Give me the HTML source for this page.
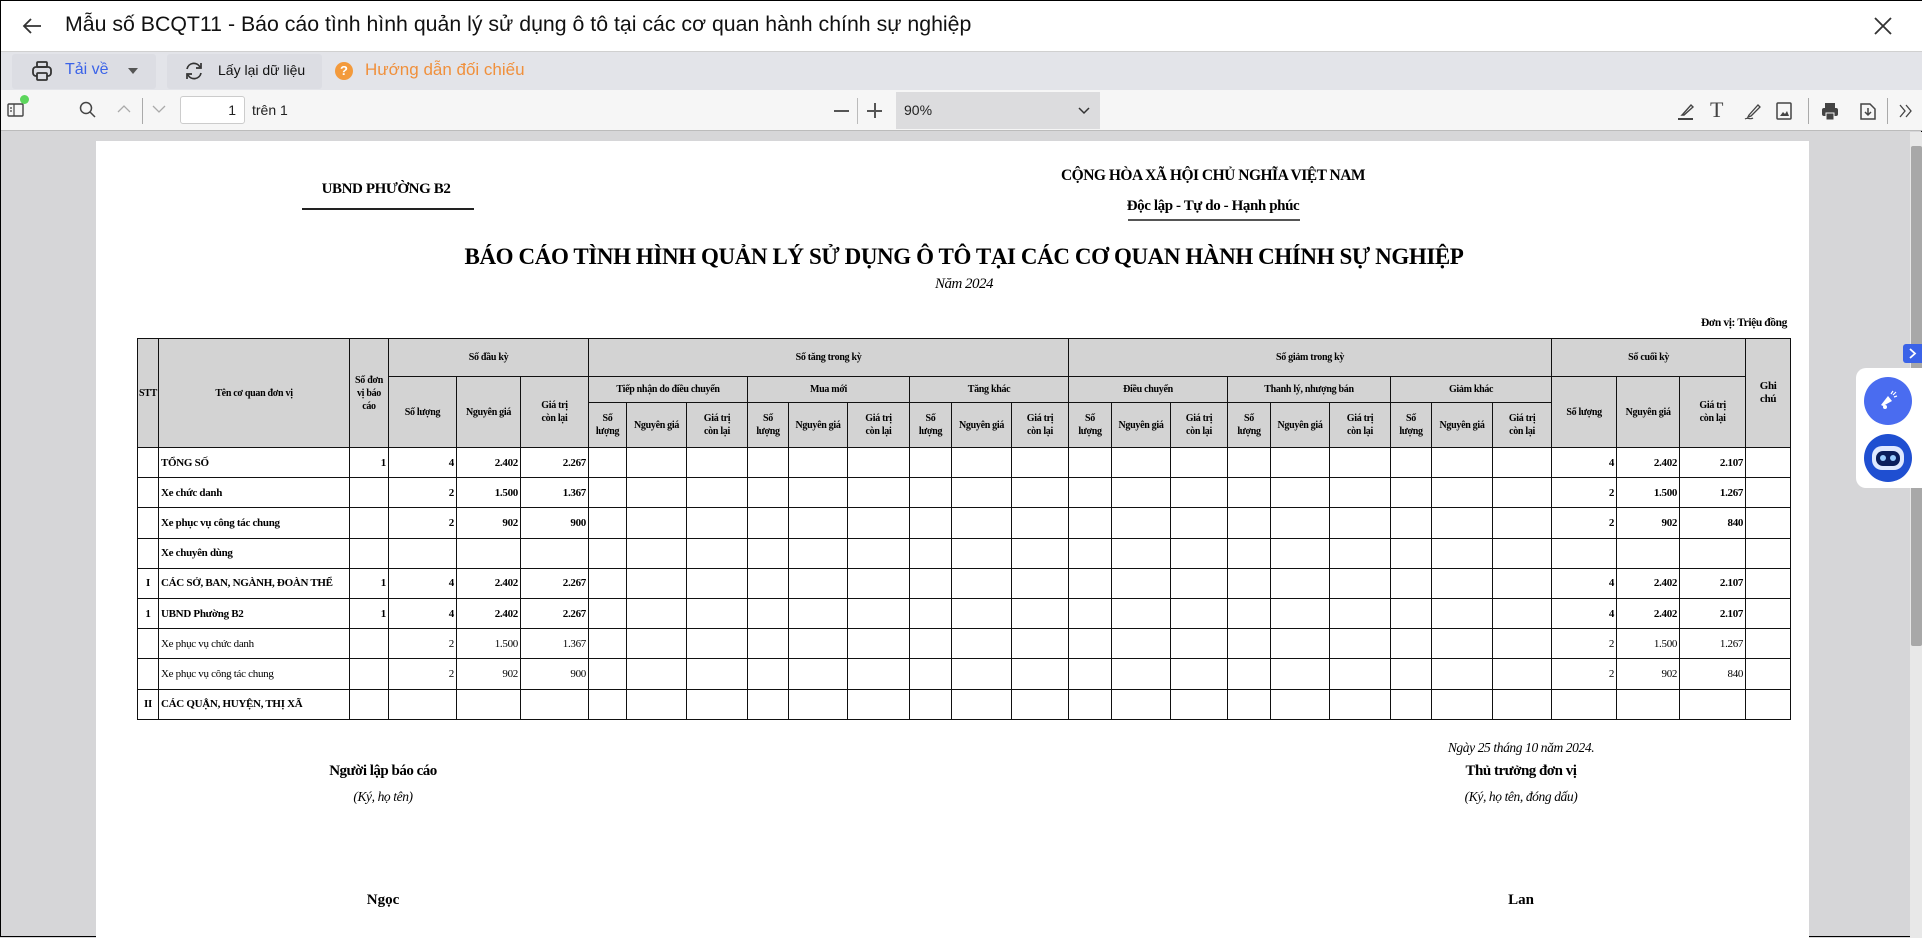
<!DOCTYPE html>
<html><head><meta charset="utf-8">
<style>
*{box-sizing:border-box;margin:0;padding:0}
body{width:1922px;height:937px;overflow:hidden;background:#d6d6d8;font-family:"Liberation Sans",sans-serif;position:relative;border:1px solid #000}
.abs{position:absolute}
.ser{font-family:"Liberation Serif",serif;color:#000;white-space:nowrap}
.c{transform:translateX(-50%)}
table{border-collapse:collapse;table-layout:fixed;font-family:"Liberation Serif",serif;font-size:10.5px;letter-spacing:-0.3px}
td{border:1px solid #111;overflow:hidden;white-space:nowrap;padding:0 2px}
thead td{background:#d3d3d3;font-weight:bold;text-align:center;white-space:nowrap;line-height:13px;font-size:10px}
tbody td{height:30.2px;text-align:right;font-weight:bold;font-size:11px}
tbody td.n{text-align:left}
tbody td.s{text-align:center}
tr.r td{font-weight:normal}
</style></head><body>
<div class="abs" style="left:0;top:0;width:1922px;height:51px;background:#fff;border-bottom:1px solid #d0d0d0"></div>
<svg class="abs" style="left:20px;top:15px" width="22" height="20" viewBox="0 0 22 20"><path d="M20 10H3M10 3L3 10l7 7" stroke="#333" stroke-width="1.8" fill="none"/></svg>
<div class="abs" style="left:64px;top:11px;font-size:21.3px;color:#111;font-weight:500;white-space:nowrap">Mẫu số BCQT11 - Báo cáo tình hình quản lý sử dụng ô tô tại các cơ quan hành chính sự nghiệp</div>
<svg class="abs" style="left:1872px;top:15px" width="20" height="20" viewBox="0 0 20 20"><path d="M2 2l16 16M18 2L2 18" stroke="#333" stroke-width="1.8"/></svg>
<div class="abs" style="left:0;top:51px;width:1922px;height:38px;background:#e3e4e9"></div>
<div class="abs" style="left:11px;top:53px;width:144px;height:35px;background:#dcdde3;border-radius:3px"></div>
<div class="abs" style="left:166px;top:53px;width:155px;height:35px;background:#dcdde3;border-radius:3px"></div>
<svg class="abs" style="left:30px;top:59px" width="22" height="22" viewBox="0 0 22 22"><rect x="2" y="7" width="18" height="9" rx="3" fill="none" stroke="#333" stroke-width="1.8"/><rect x="6" y="2" width="10" height="5" rx="1" fill="none" stroke="#333" stroke-width="1.8"/><rect x="6" y="13" width="10" height="7" rx="1" fill="#dcdde3" stroke="#333" stroke-width="1.8"/></svg>
<div class="abs" style="left:64px;top:60px;font-size:16px;color:#3b63e8">Tải về</div>
<svg class="abs" style="left:127px;top:66px" width="10" height="8"><path d="M0 1h10L5 7z" fill="#555"/></svg>
<svg class="abs" style="left:183px;top:60px" width="20" height="20" viewBox="0 0 20 20"><path d="M16 6A7 7 0 0 0 3 8M4 14a7 7 0 0 0 13-2" stroke="#333" stroke-width="1.7" fill="none"/><path d="M17 2v5h-5M3 18v-5h5" stroke="#333" stroke-width="1.7" fill="none"/></svg>
<div class="abs" style="left:217px;top:61px;font-size:14px;color:#111;font-weight:500">Lấy lại dữ liệu</div>
<div class="abs" style="left:334px;top:61px;width:18px;height:18px;border-radius:50%;background:#f39a3c;color:#fff;font-size:13px;font-weight:bold;text-align:center;line-height:18px">?</div>
<div class="abs" style="left:364px;top:59px;font-size:17px;color:#f0903c">Hướng dẫn đối chiếu</div>
<div class="abs" style="left:0;top:89px;width:1922px;height:41px;background:#f6f6f6;border-bottom:1px solid #bbb"></div>
<svg class="abs" style="left:6px;top:99px" width="20" height="18" viewBox="0 0 20 18"><rect x="1" y="4" width="15" height="12" rx="1" fill="none" stroke="#444" stroke-width="1.4"/><path d="M7 4v12M3 8h2M3 11h2" stroke="#444" stroke-width="1.2"/></svg>
<div class="abs" style="left:19px;top:94px;width:9px;height:9px;border-radius:50%;background:#5cd65c"></div>
<svg class="abs" style="left:78px;top:100px" width="18" height="18" viewBox="0 0 18 18"><circle cx="7" cy="7" r="5.5" fill="none" stroke="#444" stroke-width="1.5"/><path d="M11 11l5 5" stroke="#444" stroke-width="1.5"/></svg>
<svg class="abs" style="left:116px;top:103px" width="14" height="10"><path d="M1 8l6-6 6 6" stroke="#aaa" stroke-width="1.3" fill="none"/></svg>
<div class="abs" style="left:141px;top:97px;width:1px;height:26px;background:#aaa"></div>
<svg class="abs" style="left:151px;top:103px" width="14" height="10"><path d="M1 2l6 6 6-6" stroke="#aaa" stroke-width="1.3" fill="none"/></svg>
<div class="abs" style="left:179px;top:95px;width:65px;height:28px;background:#fff;border:1px solid #ccc;border-radius:3px;font-size:14px;text-align:right;padding:5px 8px 0 0;color:#222">1</div>
<div class="abs" style="left:251px;top:101px;font-size:14px;color:#222">trên 1</div>
<div class="abs" style="left:833px;top:109px;width:15px;height:1.5px;background:#555"></div>
<div class="abs" style="left:856px;top:97px;width:1px;height:26px;background:#bbb"></div>
<div class="abs" style="left:866px;top:109px;width:15px;height:1.5px;background:#555"></div>
<div class="abs" style="left:873px;top:102px;width:1.5px;height:15px;background:#555"></div>
<div class="abs" style="left:895px;top:91px;width:204px;height:37px;background:#dcdcde"></div>
<div class="abs" style="left:903px;top:101px;font-size:14px;color:#222">90%</div>
<svg class="abs" style="left:1077px;top:106px" width="12" height="8"><path d="M1 1l5 5 5-5" stroke="#333" stroke-width="1.5" fill="none"/></svg>
<svg class="abs" style="left:1675px;top:100px" width="20" height="20" viewBox="0 0 20 20"><path d="M7 13l8-9 2 2-9 8H6z" fill="none" stroke="#444" stroke-width="1.4"/><path d="M2 18h15" stroke="#444" stroke-width="2"/></svg>
<div class="abs ser" style="left:1709px;top:96px;font-size:22px;color:#444;font-weight:normal">T</div>
<svg class="abs" style="left:1742px;top:100px" width="20" height="20" viewBox="0 0 20 20"><path d="M6 14l9-10 2 2-9 9-3 1z" fill="none" stroke="#444" stroke-width="1.3"/><path d="M2 18c3-2 5 1 8-1" stroke="#444" stroke-width="1.2" fill="none"/></svg>
<svg class="abs" style="left:1774px;top:101px" width="18" height="18" viewBox="0 0 18 18"><rect x="2" y="1" width="14" height="16" rx="1" fill="none" stroke="#444" stroke-width="1.5"/><path d="M5 14l3-4 2 2 2-3 2 5z" fill="#444"/></svg>
<div class="abs" style="left:1807px;top:97px;width:1px;height:26px;background:#aaa"></div>
<svg class="abs" style="left:1819px;top:100px" width="20" height="20" viewBox="0 0 20 20"><rect x="5" y="2" width="10" height="5" fill="#444"/><rect x="2" y="7" width="16" height="8" rx="2" fill="#444"/><rect x="6" y="12" width="8" height="7" fill="#444" stroke="#f6f6f6" stroke-width="1"/></svg>
<svg class="abs" style="left:1857px;top:100px" width="20" height="20" viewBox="0 0 20 20"><path d="M3 3h9l5 5v10H3z" fill="none" stroke="#444" stroke-width="1.5"/><path d="M10 7v7M7 11l3 3 3-3" stroke="#444" stroke-width="1.5" fill="none"/></svg>
<div class="abs" style="left:1886px;top:97px;width:1px;height:26px;background:#aaa"></div>
<svg class="abs" style="left:1897px;top:103px" width="16" height="14"><path d="M2 1l5 6-5 6M8 1l5 6-5 6" stroke="#444" stroke-width="1.3" fill="none"/></svg>
<div class="abs" style="left:1909px;top:131px;width:13px;height:806px;background:#e8e8e8"></div>
<div class="abs" style="left:1910px;top:145px;width:11px;height:500px;background:#a8a8a8;border-radius:2px"></div>
<div class="abs" style="left:95px;top:140px;width:1713px;height:797px;background:#fff"></div>
<div class="abs ser c" style="left:385px;top:180px;font-size:15px;font-weight:bold;letter-spacing:-0.4px">UBND PHƯỜNG B2</div>
<div class="abs" style="left:301px;top:207px;width:172px;height:2px;background:#222"></div>
<div class="abs ser c" style="left:1212px;top:166px;font-size:15.5px;font-weight:bold;letter-spacing:-0.5px">CỘNG HÒA XÃ HỘI CHỦ NGHĨA VIỆT NAM</div>
<div class="abs ser c" style="left:1212px;top:197px;font-size:15px;font-weight:bold;letter-spacing:-0.4px">Độc lập - Tự do - Hạnh phúc</div>
<div class="abs" style="left:1127px;top:218px;width:172px;height:2px;background:#555"></div>
<div class="abs ser c" style="left:963px;top:243px;font-size:23px;font-weight:bold;letter-spacing:-0.4px">BÁO CÁO TÌNH HÌNH QUẢN LÝ SỬ DỤNG Ô TÔ TẠI CÁC CƠ QUAN HÀNH CHÍNH SỰ NGHIỆP</div>
<div class="abs ser c" style="left:963px;top:275px;font-size:15px;font-style:italic;letter-spacing:-0.5px">Năm 2024</div>
<div class="abs ser" style="right:134px;top:316px;font-size:11.5px;font-weight:bold;letter-spacing:-0.4px">Đơn vị: Triệu đồng</div>

<table class="abs" style="left:136px;top:337px;width:1653px">
<colgroup>
<col style="width:21px"><col style="width:191px"><col style="width:39px"><col style="width:68px"><col style="width:64px"><col style="width:68px">
<col style="width:38px"><col style="width:60px"><col style="width:61px"><col style="width:41px"><col style="width:59px"><col style="width:62px">
<col style="width:42px"><col style="width:60px"><col style="width:57px"><col style="width:43px"><col style="width:59px"><col style="width:57px">
<col style="width:43px"><col style="width:59px"><col style="width:61px"><col style="width:41px"><col style="width:61px"><col style="width:59px">
<col style="width:65px"><col style="width:63px"><col style="width:66px"><col style="width:45px">
</colgroup>
<thead>
<tr style="height:38px"><td rowspan="3" style="padding:0">STT</td><td rowspan="3">Tên cơ quan đơn vị</td><td rowspan="3">Số đơn<br>vị báo<br>cáo</td><td colspan="3">Số đầu kỳ</td><td colspan="9">Số tăng trong kỳ</td><td colspan="9">Số giảm trong kỳ</td><td colspan="3">Số cuối kỳ</td><td rowspan="3" style="font-size:11px">Ghi<br>chú</td></tr>
<tr style="height:26px"><td rowspan="2">Số lượng</td><td rowspan="2">Nguyên giá</td><td rowspan="2">Giá trị<br>còn lại</td><td colspan="3">Tiếp nhận do điều chuyển</td><td colspan="3">Mua mới</td><td colspan="3">Tăng khác</td><td colspan="3">Điều chuyển</td><td colspan="3">Thanh lý, nhượng bán</td><td colspan="3">Giảm khác</td><td rowspan="2">Số lượng</td><td rowspan="2">Nguyên giá</td><td rowspan="2">Giá trị<br>còn lại</td></tr>
<tr style="height:45px"><td>Số<br>lượng</td><td>Nguyên giá</td><td>Giá trị<br>còn lại</td><td>Số<br>lượng</td><td>Nguyên giá</td><td>Giá trị<br>còn lại</td><td>Số<br>lượng</td><td>Nguyên giá</td><td>Giá trị<br>còn lại</td><td>Số<br>lượng</td><td>Nguyên giá</td><td>Giá trị<br>còn lại</td><td>Số<br>lượng</td><td>Nguyên giá</td><td>Giá trị<br>còn lại</td><td>Số<br>lượng</td><td>Nguyên giá</td><td>Giá trị<br>còn lại</td></tr>
</thead>
<tbody>
<tr><td></td><td class="n">TỔNG SỐ</td><td>1</td><td>4</td><td>2.402</td><td>2.267</td><td></td><td></td><td></td><td></td><td></td><td></td><td></td><td></td><td></td><td></td><td></td><td></td><td></td><td></td><td></td><td></td><td></td><td></td><td>4</td><td>2.402</td><td>2.107</td><td></td></tr>
<tr><td></td><td class="n">Xe chức danh</td><td></td><td>2</td><td>1.500</td><td>1.367</td><td></td><td></td><td></td><td></td><td></td><td></td><td></td><td></td><td></td><td></td><td></td><td></td><td></td><td></td><td></td><td></td><td></td><td></td><td>2</td><td>1.500</td><td>1.267</td><td></td></tr>
<tr><td></td><td class="n">Xe phục vụ công tác chung</td><td></td><td>2</td><td>902</td><td>900</td><td></td><td></td><td></td><td></td><td></td><td></td><td></td><td></td><td></td><td></td><td></td><td></td><td></td><td></td><td></td><td></td><td></td><td></td><td>2</td><td>902</td><td>840</td><td></td></tr>
<tr><td></td><td class="n">Xe chuyên dùng</td><td></td><td></td><td></td><td></td><td></td><td></td><td></td><td></td><td></td><td></td><td></td><td></td><td></td><td></td><td></td><td></td><td></td><td></td><td></td><td></td><td></td><td></td><td></td><td></td><td></td><td></td></tr>
<tr><td class="s">I</td><td class="n">CÁC SỞ, BAN, NGÀNH, ĐOÀN THỂ</td><td>1</td><td>4</td><td>2.402</td><td>2.267</td><td></td><td></td><td></td><td></td><td></td><td></td><td></td><td></td><td></td><td></td><td></td><td></td><td></td><td></td><td></td><td></td><td></td><td></td><td>4</td><td>2.402</td><td>2.107</td><td></td></tr>
<tr><td class="s">1</td><td class="n">UBND Phường B2</td><td>1</td><td>4</td><td>2.402</td><td>2.267</td><td></td><td></td><td></td><td></td><td></td><td></td><td></td><td></td><td></td><td></td><td></td><td></td><td></td><td></td><td></td><td></td><td></td><td></td><td>4</td><td>2.402</td><td>2.107</td><td></td></tr>
<tr class="r"><td></td><td class="n">Xe phục vụ chức danh</td><td></td><td>2</td><td>1.500</td><td>1.367</td><td></td><td></td><td></td><td></td><td></td><td></td><td></td><td></td><td></td><td></td><td></td><td></td><td></td><td></td><td></td><td></td><td></td><td></td><td>2</td><td>1.500</td><td>1.267</td><td></td></tr>
<tr class="r"><td></td><td class="n">Xe phục vụ công tác chung</td><td></td><td>2</td><td>902</td><td>900</td><td></td><td></td><td></td><td></td><td></td><td></td><td></td><td></td><td></td><td></td><td></td><td></td><td></td><td></td><td></td><td></td><td></td><td></td><td>2</td><td>902</td><td>840</td><td></td></tr>
<tr><td class="s">II</td><td class="n">CÁC QUẬN, HUYỆN, THỊ XÃ</td><td></td><td></td><td></td><td></td><td></td><td></td><td></td><td></td><td></td><td></td><td></td><td></td><td></td><td></td><td></td><td></td><td></td><td></td><td></td><td></td><td></td><td></td><td></td><td></td><td></td><td></td></tr>
</tbody></table>

<div class="abs ser c" style="left:1520px;top:739px;font-size:13.5px;font-style:italic;letter-spacing:-0.4px">Ngày 25 tháng 10 năm 2024.</div>
<div class="abs ser c" style="left:382px;top:762px;font-size:15px;font-weight:bold;letter-spacing:-0.5px">Người lập báo cáo</div>
<div class="abs ser c" style="left:1520px;top:762px;font-size:15px;font-weight:bold;letter-spacing:-0.5px">Thủ trưởng đơn vị</div>
<div class="abs ser c" style="left:382px;top:788px;font-size:13.5px;font-style:italic;letter-spacing:-0.4px">(Ký, họ tên)</div>
<div class="abs ser c" style="left:1520px;top:788px;font-size:13.5px;font-style:italic;letter-spacing:-0.4px">(Ký, họ tên, đóng dấu)</div>
<div class="abs ser c" style="left:382px;top:891px;font-size:15px;font-weight:bold">Ngọc</div>
<div class="abs ser c" style="left:1520px;top:891px;font-size:15px;font-weight:bold">Lan</div>

<div class="abs" style="left:1902px;top:343px;width:20px;height:19px;background:#3b63e8;border-radius:3px 0 0 3px"></div>
<svg class="abs" style="left:1907px;top:347px" width="10" height="11"><path d="M2 1l5 4.5L2 10" stroke="#fff" stroke-width="1.8" fill="none"/></svg>
<div class="abs" style="left:1855px;top:367px;width:67px;height:120px;background:#fff;border-radius:10px 0 0 10px"></div>
<div class="abs" style="left:1863px;top:376px;width:48px;height:48px;border-radius:50%;background:#4a6cf0"></div>
<svg class="abs" style="left:1875px;top:388px" width="24" height="24" viewBox="0 0 24 24"><path d="M5 16l7-9 4 5-9 5z" fill="#fff"/><circle cx="9" cy="18" r="2" fill="#fff"/><path d="M15 5l2-3M18 8l3-1M17 6l3-3" stroke="#fff" stroke-width="1.2"/></svg>
<div class="abs" style="left:1863px;top:433px;width:48px;height:48px;border-radius:50%;background:#1f4fd1"></div>
<div class="abs" style="left:1871px;top:445px;width:32px;height:24px;border-radius:10px;background:#dfe9ff"></div>
<div class="abs" style="left:1875px;top:450px;width:24px;height:15px;border-radius:7px;background:#0b1e5c"></div>
<div class="abs" style="left:1879px;top:454px;width:6px;height:6px;border-radius:50%;background:#9cf"></div>
<div class="abs" style="left:1889px;top:454px;width:6px;height:6px;border-radius:50%;background:#9cf"></div>
</body></html>
